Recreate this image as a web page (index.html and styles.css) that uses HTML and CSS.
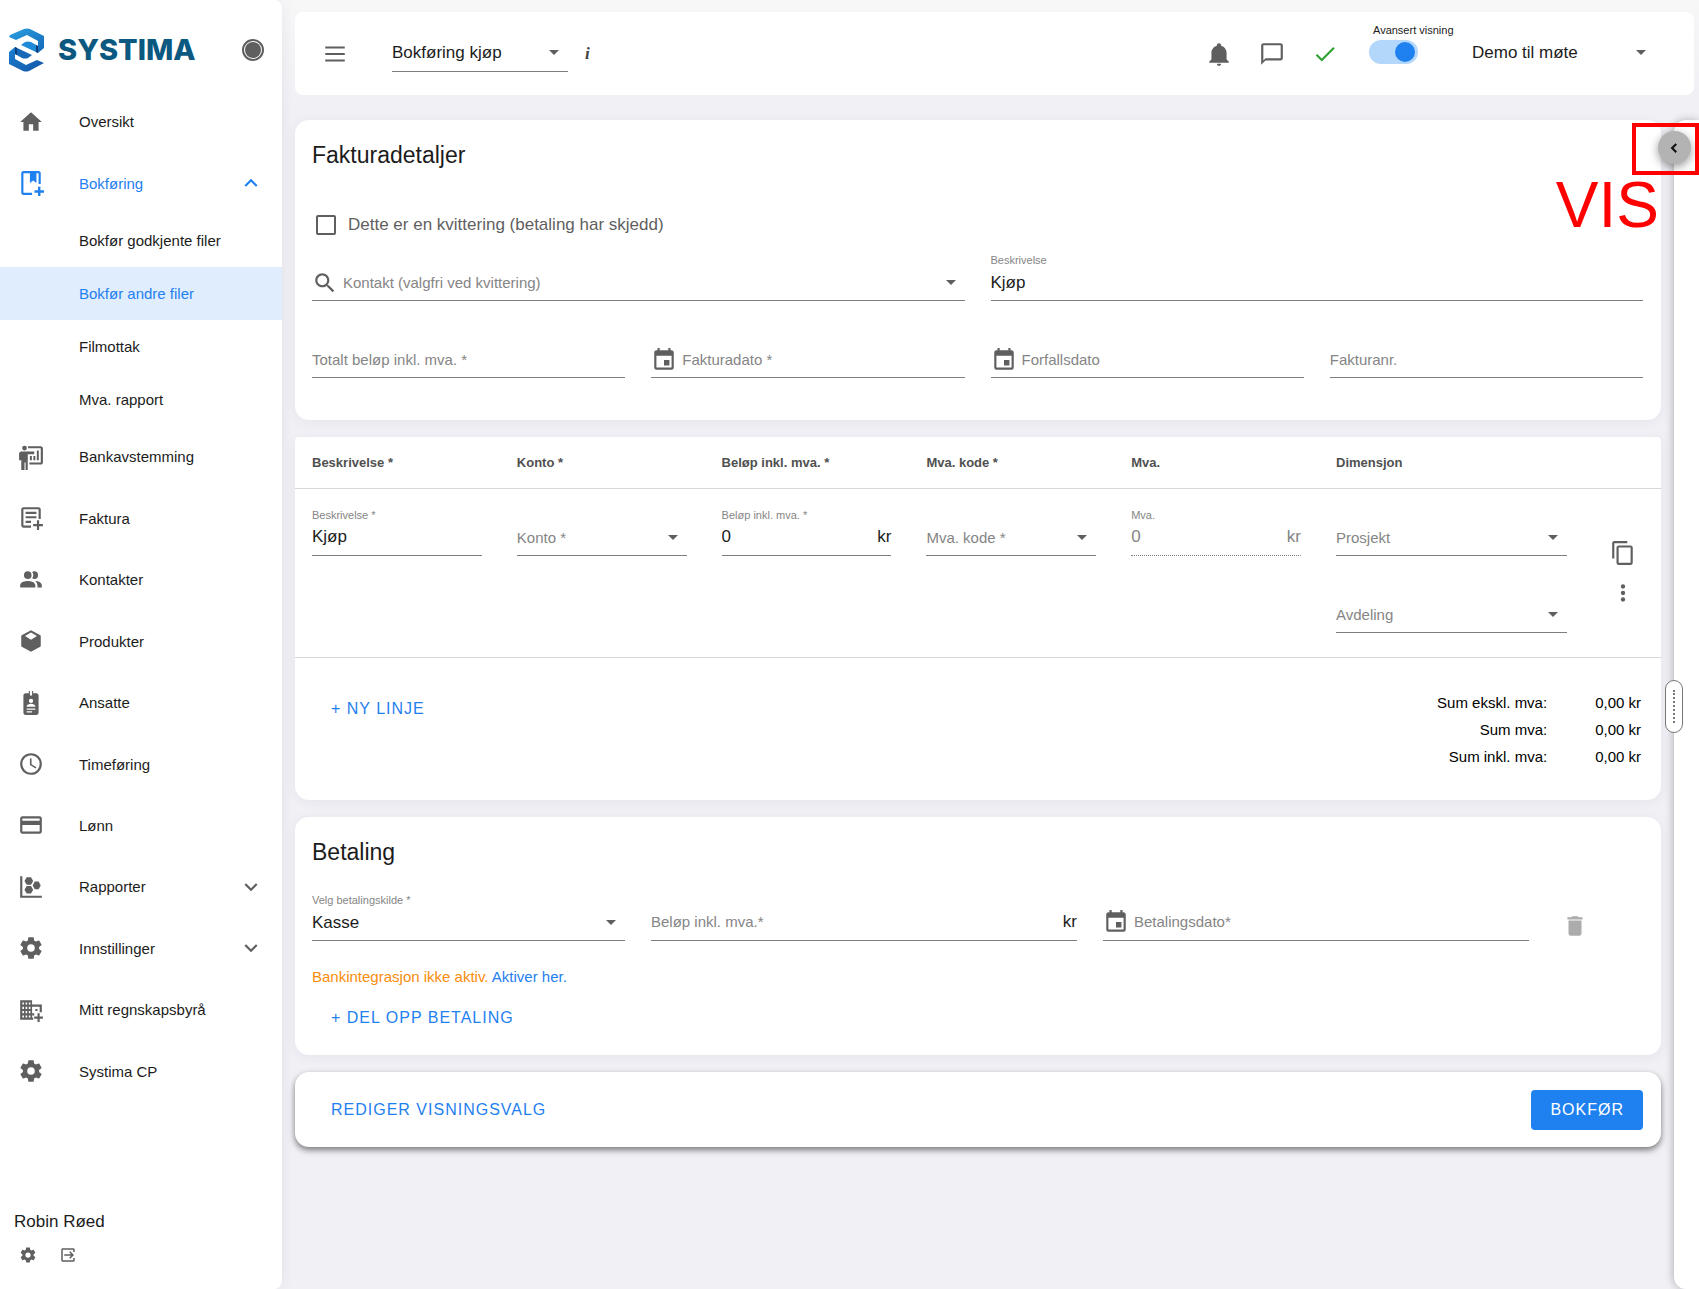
FILE: index.html
```
<!DOCTYPE html>
<html lang="no">
<head>
    <meta charset="UTF-8">
    <meta name="viewport" content="width=device-width, initial-scale=1.0">
    <title>Bokføring kjøp - Systima</title>
    <link rel="stylesheet" href="styles.css">
</head>
<body>
    <!-- Ikoner -->
    <svg class="sprite" aria-hidden="true">
        <symbol id="i-home" viewBox="0 0 24 24"><path d="M10 20v-6h4v6h5v-8h3L12 3 2 12h3v8z"/></symbol>
        <symbol id="i-book" viewBox="0 0 24 24"><path d="M5 1h14c1.100 0 2 .9 2 2v10h-2V3h-2v9l-3-2.200L11 12V3H5v18h8v2H5c-1.100 0-2-.9-2-2V3c0-1.100.9-2 2-2z"/><path d="M18.500 15.500h2.200v3.300H24V21h-3.300v3h-2.200v-3h-3.300v-2.200h3.300z"/></symbol>
        <symbol id="i-board" viewBox="0 0 24 24"><circle cx="6" cy="3.800" r="2.200"/><path d="M3 7h12v2.500H9V24H7v-7H6v7H3v-9H1V9c0-1.100.9-2 2-2z"/><path d="M9 2h12c1.100 0 2 .9 2 2v13c0 1.100-.9 2-2 2H10.500v-2H21V4H9.500z"/><path d="M11 11h1.800v4H11zM14.200 11H16v4h-1.800zM17.400 6h1.800v9h-1.800z"/></symbol>
        <symbol id="i-invoice" viewBox="0 0 24 24"><path d="M5 2h14c1.100 0 2 .9 2 2v9h-2V4H5v15h7v2H5c-1.100 0-2-.9-2-2V4c0-1.100.9-2 2-2z"/><path d="M7 6.300h10v2H7zM7 10.300h10v2H7zM7 14.500h5v2H7zM17.500 14h2v3.500H23v2h-3.500V23h-2v-3.500H14v-2h3.500z"/></symbol>
        <symbol id="i-people" viewBox="0 0 24 24"><path d="M16 17V19H2V17S2 13 9 13 16 17 16 17M12.500 7.500A3.500 3.500 0 1 0 9 11A3.500 3.500 0 0 0 12.500 7.500M15.940 13A5.320 5.320 0 0 1 18 17V19H22V17S22 13.370 15.940 13M15 4A3.390 3.390 0 0 0 13.070 4.590A5 5 0 0 1 13.070 10.410A3.390 3.390 0 0 0 15 11A3.500 3.500 0 0 0 15 4Z"/></symbol>
        <symbol id="i-box" viewBox="0 0 24 24"><path fill-rule="evenodd" d="M12 2l8.600 4.600c.3.200.4.500.4.900v9c0 .4-.2.700-.5.900L12 22l-8.500-4.600c-.3-.2-.5-.5-.5-.9v-9c0-.4.100-.7.400-.9zM12 4.200L6.500 7.300 12 10.800l5.500-3.500z"/></symbol>
        <symbol id="i-badge" viewBox="0 0 24 24"><path fill-rule="evenodd" d="M10 1h1v4h2V1h1v2h3c1.100 0 2 .9 2 2v16c0 1.100-.9 2-2 2H7c-1.100 0-2-.9-2-2V5c0-1.100.9-2 2-2h3zM12 8a2 2 0 1 0 0 4 2 2 0 0 0 0-4zM8 15.500h8v-.7c0-1.200-2-2.200-4-2.200s-4 1-4 2.200zM8 17v1.200h8V17zM8 19.500v1.200h5v-1.200z"/></symbol>
        <symbol id="i-clock" viewBox="0 0 24 24"><path d="M12 20A8 8 0 0 0 20 12A8 8 0 0 0 12 4A8 8 0 0 0 4 12A8 8 0 0 0 12 20M12 2A10 10 0 0 1 22 12A10 10 0 0 1 12 22C6.470 22 2 17.500 2 12A10 10 0 0 1 12 2M12.500 7V12.250L17 14.920L16.250 16.150L11 13V7H12.500Z"/></symbol>
        <symbol id="i-card" viewBox="0 0 24 24"><path d="M20 4H4c-1.110 0-1.990.89-1.990 2L2 18c0 1.110.89 2 2 2h16c1.110 0 2-.89 2-2V6c0-1.110-.89-2-2-2zm0 14H4v-6h16v6zm0-10H4V6h16v2z"/></symbol>
        <symbol id="i-chart" viewBox="0 0 24 24"><path d="M2 2h2v18h18v2H2zM8 3h4l2 3.500-2 3.500H8L6 6.500zM8 11h4l2 3.500-2 3.500H8l-2-3.500zM15.500 7h3.500l2 3.500-2 3.500h-3.500l-2-3.500z"/></symbol>
        <symbol id="i-cog" viewBox="0 0 24 24"><path d="M12,15.500A3.500,3.500 0 0,1 8.500,12A3.500,3.500 0 0,1 12,8.500A3.500,3.500 0 0,1 15.500,12A3.500,3.500 0 0,1 12,15.500M19.430,12.970C19.470,12.650 19.500,12.330 19.500,12C19.500,11.670 19.470,11.340 19.430,11L21.540,9.370C21.730,9.220 21.780,8.950 21.660,8.730L19.660,5.270C19.540,5.050 19.270,4.960 19.050,5.050L16.560,6.050C16.040,5.660 15.500,5.320 14.870,5.070L14.500,2.420C14.460,2.180 14.250,2 14,2H10C9.750,2 9.540,2.180 9.500,2.420L9.130,5.070C8.500,5.320 7.960,5.660 7.440,6.050L4.950,5.050C4.730,4.960 4.460,5.050 4.340,5.270L2.340,8.730C2.210,8.950 2.270,9.220 2.460,9.370L4.570,11C4.530,11.340 4.500,11.670 4.500,12C4.500,12.330 4.530,12.650 4.570,12.970L2.460,14.630C2.270,14.780 2.210,15.050 2.340,15.270L4.340,18.730C4.460,18.950 4.730,19.030 4.950,18.950L7.440,17.940C7.960,18.340 8.500,18.680 9.130,18.930L9.500,21.580C9.540,21.820 9.750,22 10,22H14C14.250,22 14.460,21.820 14.500,21.580L14.870,18.930C15.500,18.670 16.040,18.340 16.560,17.940L19.050,18.950C19.270,19.030 19.540,18.950 19.660,18.730L21.660,15.270C21.780,15.050 21.730,14.780 21.540,14.630L19.430,12.970Z"/></symbol>
        <symbol id="i-office" viewBox="0 0 24 24"><path fill-rule="evenodd" d="M2 3h11v4h9v7h-2V9h-7v10h1v2H2zM4 5v2h1.500V5zM7 5v2h1.500V5zM10 5v2h1.500V5zM4 9v2h1.500V9zM7 9v2h1.500V9zM10 9v2h1.500V9zM4 13v2h1.500v-2zM7 13v2h1.500v-2zM10 13v2h1.500v-2zM4 17v2h1.500v-2zM7 17v2h1.500v-2zM10 17v2h1.500v-2z"/><path d="M16 11h2v2h-2zM13 15h2v2h-2zM18 15h2v3h3v2h-3v3h-2v-3h-3v-2h3z"/></symbol>
        <symbol id="i-exit" viewBox="0 0 24 24"><path d="M4 3h15c1.100 0 2 .9 2 2v3h-2V5H5v14h14v-3h2v3c0 1.100-.9 2-2 2H5c-1.100 0-2-.9-2-2V5z"/><path d="M7 11h9.200l-2.600-2.600L15 7l5 5-5 5-1.400-1.400 2.600-2.600H7z"/></symbol>
        <symbol id="i-down" viewBox="0 0 24 24"><path d="M16.590 8.590L12 13.170 7.410 8.590 6 10l6 6 6-6z"/></symbol>
        <symbol id="i-up" viewBox="0 0 24 24"><path d="M12 8l-6 6 1.410 1.410L12 10.830l4.590 4.580L18 14z"/></symbol>
        <symbol id="i-left" viewBox="0 0 24 24"><path d="M16 7.500L14 5.500 7.500 12l6.500 6.500 2-2L11.500 12z"/></symbol>
        <symbol id="i-menu" viewBox="0 0 24 24"><path d="M3 5h18v2H3zM3 11h18v2H3zM3 17h18v2H3z"/></symbol>
        <symbol id="i-bell" viewBox="0 0 24 24"><path d="M21 19V20H3V19L5 17V11C5 7.900 7.030 5.170 10 4.290C10 4.190 10 4.100 10 4A2 2 0 0 1 14 4C14 4.100 14 4.190 14 4.290C16.970 5.170 19 7.900 19 11V17L21 19M14 21A2 2 0 0 1 10 21"/></symbol>
        <symbol id="i-chat" viewBox="0 0 24 24"><path d="M20 2H4c-1.100 0-2 .9-2 2v18l4-4h14c1.100 0 2-.9 2-2V4c0-1.100-.9-2-2-2zm0 14H6l-2 2V4h16v12z"/></symbol>
        <symbol id="i-check" viewBox="0 0 24 24"><path d="M9 16.170L4.830 12l-1.420 1.410L9 19 21 7l-1.410-1.410z"/></symbol>
        <symbol id="i-search" viewBox="0 0 24 24"><path d="M15.500 14h-.79l-.28-.27C15.410 12.590 16 11.110 16 9.500 16 5.910 13.090 3 9.500 3S3 5.910 3 9.500 5.910 16 9.500 16c1.610 0 3.090-.59 4.230-1.570l.27.28v.79l5 4.990L20.490 19l-4.990-5zm-6 0C7.010 14 5 11.990 5 9.500S7.010 5 9.500 5 14 7.010 14 9.500 11.990 14 9.500 14z"/></symbol>
        <symbol id="i-calendar" viewBox="0 0 24 24"><path d="M19,19H5V8H19M16,1V3H8V1H6V3H5C3.890,3 3,3.890 3,5V19A2,2 0 0,0 5,21H19A2,2 0 0,0 21,19V5C21,3.890 20.100,3 19,3H18V1M17,12H12V17H17V12Z"/></symbol>
        <symbol id="i-copy" viewBox="0 0 24 24"><path d="M16 1H4c-1.100 0-2 .9-2 2v14h2V3h12V1zm3 4H8c-1.100 0-2 .9-2 2v14c0 1.100.9 2 2 2h11c1.100 0 2-.9 2-2V7c0-1.100-.9-2-2-2zm0 16H8V7h11v14z"/></symbol>
        <symbol id="i-more" viewBox="0 0 24 24"><circle cx="12" cy="6" r="2"/><circle cx="12" cy="12" r="2"/><circle cx="12" cy="18" r="2"/></symbol>
        <symbol id="i-trash" viewBox="0 0 24 24"><path d="M6 19c0 1.100.9 2 2 2h8c1.100 0 2-.9 2-2V7H6v12zM19 4h-3.500l-1-1h-5l-1 1H5v2h14V4z"/></symbol>
    </svg>

    <div class="app">
        <aside class="sidebar">
            <div class="brand">
                <svg class="brand-mark" viewBox="0 0 35 44" aria-hidden="true">
                    <defs>
                        <linearGradient id="g1" x1="0" y1="0" x2="1" y2="1">
                            <stop offset="0" stop-color="#2a9fe0"/>
                            <stop offset="1" stop-color="#1668b8"/>
                        </linearGradient>
                        <linearGradient id="g2" x1="0" y1="0" x2="1" y2="1">
                            <stop offset="0" stop-color="#1b7fd0"/>
                            <stop offset="1" stop-color="#1256a6"/>
                        </linearGradient>
                    </defs>
                    <path fill="url(#g1)" d="M0 9L1 7 15 1q3-1 6 0l14 7v12l-6 5V13L18 7 7 12z"/>
                    <path fill="url(#g2)" d="M35 35l-15 8q-3 1-6 0L0 36V24l6-5v12l11 6 11-5z"/>
                    <path fill="#1f8bd8" d="M12 17l4-3q3-1 6 0l7 4v7z"/>
                    <path fill="#1769b8" d="M23 27l-4 3q-3 1-6 0l-7-4v-7z"/>
                    <path fill="#0c3d7c" d="M27 17l2 1v7l-2-1zM6 19l2 1v7l-2-1z"/>
                </svg>
                <span class="brand-name">SYSTIMA</span>
                <button class="pin" type="button" aria-label="Fest meny"><span></span></button>
            </div>

            <nav class="menu">
                <a class="menu-item" href="#"><svg class="icon"><use href="#i-home"/></svg>Oversikt</a>
                <a class="menu-item open" href="#"><svg class="icon"><use href="#i-book"/></svg>Bokføring<svg class="icon chevron"><use href="#i-up"/></svg></a>
                <div class="submenu">
                    <a href="#">Bokfør godkjente filer</a>
                    <a class="active" href="#">Bokfør andre filer</a>
                    <a href="#">Filmottak</a>
                    <a href="#">Mva. rapport</a>
                </div>
                <a class="menu-item" href="#"><svg class="icon"><use href="#i-board"/></svg>Bankavstemming</a>
                <a class="menu-item" href="#"><svg class="icon"><use href="#i-invoice"/></svg>Faktura</a>
                <a class="menu-item" href="#"><svg class="icon"><use href="#i-people"/></svg>Kontakter</a>
                <a class="menu-item" href="#"><svg class="icon"><use href="#i-box"/></svg>Produkter</a>
                <a class="menu-item" href="#"><svg class="icon"><use href="#i-badge"/></svg>Ansatte</a>
                <a class="menu-item" href="#"><svg class="icon"><use href="#i-clock"/></svg>Timeføring</a>
                <a class="menu-item" href="#"><svg class="icon"><use href="#i-card"/></svg>Lønn</a>
                <a class="menu-item" href="#"><svg class="icon"><use href="#i-chart"/></svg>Rapporter<svg class="icon chevron"><use href="#i-down"/></svg></a>
                <a class="menu-item" href="#"><svg class="icon"><use href="#i-cog"/></svg>Innstillinger<svg class="icon chevron"><use href="#i-down"/></svg></a>
                <a class="menu-item" href="#"><svg class="icon"><use href="#i-office"/></svg>Mitt regnskapsbyrå</a>
                <a class="menu-item" href="#"><svg class="icon"><use href="#i-cog"/></svg>Systima CP</a>
            </nav>

            <div class="user">
                <div class="user-name">Robin Røed</div>
                <div class="user-actions">
                    <button class="icon-button" type="button" aria-label="Innstillinger"><svg class="icon small"><use href="#i-cog"/></svg></button>
                    <button class="icon-button" type="button" aria-label="Logg ut"><svg class="icon small"><use href="#i-exit"/></svg></button>
                </div>
            </div>
        </aside>

        <div class="main">
            <header class="topbar">
                <button class="icon-button" type="button" aria-label="Meny"><svg class="icon"><use href="#i-menu"/></svg></button>
                <div class="control page-select">
                    <select aria-label="Side"><option>Bokføring kjøp</option></select>
                    <span class="caret"></span>
                </div>
                <span class="info">i</span>

                <div class="topbar-right">
                    <button class="icon-button" type="button" aria-label="Varsler"><svg class="icon"><use href="#i-bell"/></svg></button>
                    <button class="icon-button" type="button" aria-label="Meldinger"><svg class="icon"><use href="#i-chat"/></svg></button>
                    <button class="icon-button ok" type="button" aria-label="Status"><svg class="icon"><use href="#i-check"/></svg></button>
                    <label class="toggle">
                        <span>Avansert visning</span>
                        <input type="checkbox" role="switch" checked>
                    </label>
                    <div class="control team-select">
                        <select aria-label="Firma"><option>Demo til møte</option></select>
                        <span class="caret"></span>
                    </div>
                </div>
            </header>

            <div class="workspace">
                <main class="content">
                    <section class="card details">
                        <h2>Fakturadetaljer</h2>
                        <label class="receipt">
                            <input type="checkbox">
                            Dette er en kvittering (betaling har skjedd)
                        </label>
                        <div class="form-grid">
                            <div class="field wide">
                                <div class="control">
                                    <svg class="icon"><use href="#i-search"/></svg>
                                    <input type="text" placeholder="Kontakt (valgfri ved kvittering)" aria-label="Kontakt">
                                    <span class="caret"></span>
                                </div>
                            </div>
                            <div class="field wide">
                                <label for="description">Beskrivelse</label>
                                <div class="control"><input type="text" id="description" value="Kjøp"></div>
                            </div>
                            <div class="field">
                                <div class="control"><input type="text" placeholder="Totalt beløp inkl. mva. *" aria-label="Totalt beløp inkl. mva."></div>
                            </div>
                            <div class="field">
                                <div class="control">
                                    <svg class="icon"><use href="#i-calendar"/></svg>
                                    <input type="text" placeholder="Fakturadato *" aria-label="Fakturadato">
                                </div>
                            </div>
                            <div class="field">
                                <div class="control">
                                    <svg class="icon"><use href="#i-calendar"/></svg>
                                    <input type="text" placeholder="Forfallsdato" aria-label="Forfallsdato">
                                </div>
                            </div>
                            <div class="field">
                                <div class="control"><input type="text" placeholder="Fakturanr." aria-label="Fakturanr."></div>
                            </div>
                        </div>
                    </section>

                    <section class="card lines">
                        <table class="line-table">
                            <thead>
                                <tr>
                                    <th>Beskrivelse *</th>
                                    <th>Konto *</th>
                                    <th>Beløp inkl. mva. *</th>
                                    <th>Mva. kode *</th>
                                    <th>Mva.</th>
                                    <th class="col-dimension">Dimensjon</th>
                                    <th class="col-actions"></th>
                                </tr>
                            </thead>
                            <tbody>
                                <tr>
                                    <td>
                                        <div class="field">
                                            <label for="line-description">Beskrivelse *</label>
                                            <div class="control"><input type="text" id="line-description" value="Kjøp"></div>
                                        </div>
                                    </td>
                                    <td>
                                        <div class="field">
                                            <div class="control"><select class="empty" aria-label="Konto"><option>Konto *</option></select><span class="caret"></span></div>
                                        </div>
                                    </td>
                                    <td>
                                        <div class="field">
                                            <label for="line-amount">Beløp inkl. mva. *</label>
                                            <div class="control"><input type="text" id="line-amount" value="0"><span class="suffix">kr</span></div>
                                        </div>
                                    </td>
                                    <td>
                                        <div class="field">
                                            <div class="control"><select class="empty" aria-label="Mva. kode"><option>Mva. kode *</option></select><span class="caret"></span></div>
                                        </div>
                                    </td>
                                    <td>
                                        <div class="field disabled">
                                            <label for="line-vat">Mva.</label>
                                            <div class="control"><input type="text" id="line-vat" value="0" disabled><span class="suffix">kr</span></div>
                                        </div>
                                    </td>
                                    <td>
                                        <div class="dimensions">
                                            <div class="field">
                                                <div class="control"><select class="empty" aria-label="Prosjekt"><option>Prosjekt</option></select><span class="caret"></span></div>
                                            </div>
                                            <div class="field">
                                                <div class="control"><select class="empty" aria-label="Avdeling"><option>Avdeling</option></select><span class="caret"></span></div>
                                            </div>
                                        </div>
                                    </td>
                                    <td class="col-actions">
                                        <div class="line-actions">
                                            <button class="icon-button" type="button" aria-label="Kopier linje"><svg class="icon"><use href="#i-copy"/></svg></button>
                                            <button class="icon-button" type="button" aria-label="Mer"><svg class="icon"><use href="#i-more"/></svg></button>
                                        </div>
                                    </td>
                                </tr>
                            </tbody>
                        </table>
                        <div class="line-footer">
                            <button class="text-button" type="button">+ NY LINJE</button>
                            <dl class="sums">
                                <dt>Sum ekskl. mva:</dt><dd>0,00 kr</dd>
                                <dt>Sum mva:</dt><dd>0,00 kr</dd>
                                <dt>Sum inkl. mva:</dt><dd>0,00 kr</dd>
                            </dl>
                        </div>
                    </section>

                    <section class="card payment">
                        <h2>Betaling</h2>
                        <div class="payment-grid">
                            <div class="field">
                                <label for="source">Velg betalingskilde *</label>
                                <div class="control"><select id="source"><option>Kasse</option></select><span class="caret"></span></div>
                            </div>
                            <div class="field">
                                <div class="control"><input type="text" placeholder="Beløp inkl. mva.*" aria-label="Beløp inkl. mva."><span class="suffix">kr</span></div>
                            </div>
                            <div class="field">
                                <div class="control">
                                    <svg class="icon"><use href="#i-calendar"/></svg>
                                    <input type="text" placeholder="Betalingsdato*" aria-label="Betalingsdato">
                                </div>
                            </div>
                            <button class="icon-button remove" type="button" aria-label="Slett" disabled><svg class="icon"><use href="#i-trash"/></svg></button>
                        </div>
                        <p class="bank-note">Bankintegrasjon ikke aktiv. <a href="#">Aktiver her.</a></p>
                        <button class="text-button" type="button">+ DEL OPP BETALING</button>
                    </section>

                    <section class="card actions">
                        <button class="text-button" type="button">REDIGER VISNINGSVALG</button>
                        <button class="primary-button" type="button">BOKFØR</button>
                    </section>
                </main>

                <aside class="drawer">
                    <button class="drawer-toggle" type="button" aria-label="Vis"><svg class="icon small"><use href="#i-left"/></svg></button>
                    <div class="drawer-handle"></div>
                    <div class="marker"></div>
                    <div class="marker-text">VIS</div>
                </aside>
            </div>
        </div>
    </div>
</body>
</html>
```
FILE: styles.css
```
* {
    box-sizing: border-box;
}

body {
    margin: 0;
    font-family: "Liberation Sans", Arial, sans-serif;
    font-size: 15px;
    color: #1c1c1c;
    background: #f0f0f5 linear-gradient(#f7f7f8, #f0f0f5 110px) no-repeat;
}

a {
    color: #1f80f0;
    text-decoration: none;
}

button,
input,
select {
    font-family: inherit;
    color: inherit;
}

.sprite {
    display: none;
}

.icon {
    width: 26px;
    height: 26px;
    flex: none;
    fill: #5f5f5f;
}

.icon.small {
    width: 18px;
    height: 18px;
}

.icon-button {
    display: flex;
    align-items: center;
    justify-content: center;
    padding: 0;
    border: none;
    background: none;
    cursor: pointer;
}

.app {
    display: flex;
    min-height: 100vh;
}

/* Sidemeny */
.sidebar {
    display: flex;
    flex-direction: column;
    flex: none;
    width: 282px;
    background: #fff;
    border-radius: 0 8px 8px 0;
    box-shadow: 2px 0 12px rgba(60, 50, 100, 0.06);
}

.brand {
    display: flex;
    align-items: center;
    height: 91px;
    padding: 8px 18px 0 9px;
}

.brand-mark {
    width: 35px;
    height: 44px;
    margin-right: 14px;
}

.brand-name {
    font-family: Inter, "Liberation Sans", sans-serif;
    font-size: 29px;
    font-weight: 800;
    color: #0b5880;
}

.pin {
    width: 22px;
    height: 22px;
    margin-left: auto;
    padding: 1px;
    border: 2px solid #5f5f5f;
    border-radius: 50%;
    background: none;
}

.pin span {
    display: block;
    height: 100%;
    border-radius: 50%;
    background: #5f5f5f;
}

.menu {
    display: flex;
    flex-direction: column;
    flex: 1;
}

.menu a {
    display: flex;
    align-items: center;
    color: #1c1c1c;
}

.menu .menu-item {
    flex: 1;
    gap: 35px;
    padding: 0 18px;
}

.menu .menu-item.open {
    color: #1f80f0;
}

.menu .open .icon {
    fill: #1f80f0;
}

.menu .chevron {
    margin-left: auto;
}

.submenu a {
    height: 53px;
    padding-left: 79px;
}

.submenu a.active {
    color: #1f80f0;
    background: #e0edfc;
}

.user {
    height: 187px;
    padding: 108px 14px 0;
}

.user-name {
    font-size: 17px;
    line-height: 24px;
}

.user-actions {
    display: flex;
    gap: 22px;
    padding: 12px 5px;
}

/* Toppfelt */
.main {
    display: flex;
    flex-direction: column;
    flex: 1;
    min-width: 0;
    padding: 12px 0 0 13px;
}

.topbar {
    display: flex;
    align-items: center;
    height: 83px;
    margin-right: 5px;
    padding: 0 39px 0 27px;
    background: #fff;
    border-radius: 8px;
}

.page-select {
    margin-left: 44px;
}

.topbar .control {
    width: 176px;
    height: 36px;
}

.info {
    margin-left: 17px;
    font-family: "Liberation Serif", serif;
    font-size: 17px;
    font-style: italic;
    font-weight: bold;
    color: #444;
}

.topbar-right {
    display: flex;
    align-items: center;
    align-self: stretch;
    gap: 27px;
    margin-left: auto;
}

.topbar .ok .icon {
    fill: #2fa236;
}

.toggle {
    display: flex;
    flex-direction: column;
    align-self: flex-start;
    gap: 2px;
    width: 90px;
    padding: 10px 0 0;
    margin-left: 4px;
    font-size: 11px;
    line-height: 16px;
}

.toggle span {
    padding-left: 4px;
    white-space: nowrap;
}

.toggle input {
    display: flex;
    appearance: none;
    width: 49px;
    height: 24px;
    margin: 0;
    padding: 2px 3px;
    border-radius: 12px;
    background: #b3d6fb;
    justify-content: flex-end;
}

.toggle input::before {
    content: "";
    width: 20px;
    height: 20px;
    border-radius: 50%;
    background: #1f80f0;
}

.topbar .team-select {
    width: 183px;
    margin-left: -14px;
    border-bottom: none;
}

/* Skjemafelt */
.field {
    display: flex;
    flex-direction: column;
    justify-content: flex-end;
    height: 48px;
}

.field label {
    font-size: 11px;
    line-height: 14px;
    color: #858585;
    white-space: nowrap;
}

.control {
    display: flex;
    align-items: center;
    height: 34px;
    padding-bottom: 2px;
    border-bottom: 1px solid #7d7d7d;
}

.control input,
.control select {
    flex: 1;
    min-width: 0;
    width: 100%;
    height: 30px;
    padding: 0;
    border: none;
    outline: none;
    appearance: none;
    background: none;
    font-size: 17px;
}

.control .icon {
    margin-right: 5px;
}

.control input::placeholder {
    font-size: 15px;
    color: #858585;
    opacity: 1;
}

.control select.empty {
    font-size: 15px;
    color: #858585;
}

.caret {
    flex: none;
    margin-right: 9px;
    border: 5px solid transparent;
    border-top-color: #5f5f5f;
    border-bottom: none;
}

.suffix {
    font-size: 17px;
}

.disabled .control {
    color: #858585;
    border-bottom-style: dotted;
}

/* Innhold */
.workspace {
    display: flex;
    flex: 1;
    gap: 13px;
    padding-top: 25px;
}

.content {
    display: flex;
    flex-direction: column;
    flex: 1;
    gap: 17px;
    min-width: 0;
}

.card {
    background: #fff;
    border-radius: 14px;
    box-shadow: 0 2px 12px rgba(60, 50, 100, 0.06);
}

h2 {
    margin: 0;
    font-size: 23px;
    font-weight: normal;
    line-height: 30px;
}

.details {
    padding: 20px 18px 42px 17px;
}

.receipt {
    display: flex;
    align-items: center;
    gap: 12px;
    height: 24px;
    margin: 43px 0 16px 4px;
    font-size: 17px;
    color: #5f5f5f;
}

.receipt input {
    appearance: none;
    width: 20px;
    height: 20px;
    margin: 0;
    border: 2px solid #5f5f5f;
    border-radius: 2px;
}

.form-grid {
    display: grid;
    grid-template-columns: repeat(4, 1fr);
    gap: 29px 26px;
}

.wide {
    grid-column: span 2;
}

.lines {
    border-top-left-radius: 4px;
    border-top-right-radius: 4px;
}

.line-table {
    width: 100%;
    table-layout: fixed;
    border-collapse: collapse;
}

.line-table tr {
    border-bottom: 1px solid #d8d8d8;
}

.line-table th {
    height: 51px;
    padding: 0 17px;
    font-size: 13px;
    text-align: left;
    color: #505050;
}

.line-table td {
    padding: 19px 18px 24px 17px;
    vertical-align: top;
}

.line-table .col-dimension {
    width: 266px;
}

.line-table .col-actions {
    width: 76px;
    padding-left: 0;
    padding-right: 0;
}

.dimensions {
    display: flex;
    flex-direction: column;
    gap: 29px;
}

.line-actions {
    display: flex;
    flex-direction: column;
    align-items: center;
    gap: 14px;
    padding-top: 32px;
}

.line-footer {
    display: flex;
    justify-content: space-between;
    align-items: flex-start;
    padding: 31px 20px 30px 17px;
}

.sums {
    display: grid;
    grid-template-columns: auto auto;
    gap: 0 48px;
    margin: 0;
    line-height: 27px;
    text-align: right;
    color: #000;
}

.sums dd {
    margin: 0;
}

.text-button,
.primary-button {
    height: 40px;
    padding: 0 19px;
    border: none;
    border-radius: 4px;
    background: none;
    font-size: 16px;
    letter-spacing: 1px;
    color: #1f80f0;
    cursor: pointer;
}

.primary-button {
    color: #fff;
    background: #1f80f0;
}

.payment {
    padding: 20px 18px 17px 17px;
}

.payment-grid {
    display: grid;
    grid-template-columns: 313fr 426fr 426fr 88fr;
    gap: 26px;
    margin-top: 26px;
}

.remove {
    align-self: end;
    width: 40px;
    height: 30px;
}

.remove .icon {
    fill: #acacac;
}

.bank-note {
    margin: 24px 0 9px;
    line-height: 24px;
    color: #fa8c0c;
}

.actions {
    display: flex;
    justify-content: space-between;
    align-items: center;
    padding: 18px 18px 17px 17px;
    box-shadow: 0 3px 6px rgba(0, 0, 0, 0.5);
}

/* Skuff til høyre */
.drawer {
    position: relative;
    flex: none;
    width: 25px;
    background: #fff;
    border-radius: 12px 0 0 12px;
    box-shadow: -1px 0 8px rgba(0, 0, 0, 0.25);
}

.drawer-toggle {
    position: absolute;
    top: 11px;
    left: -16px;
    display: flex;
    align-items: center;
    justify-content: center;
    width: 33px;
    height: 33px;
    padding: 0 2px 0 0;
    border: none;
    border-radius: 50%;
    background: #b3b3b3;
    box-shadow: 0 3px 10px rgba(0, 0, 0, 0.4);
}

.drawer-toggle .icon {
    fill: #111;
}

.drawer-handle {
    position: absolute;
    top: 560px;
    left: -9px;
    display: flex;
    justify-content: center;
    width: 18px;
    height: 53px;
    padding: 9px 0;
    border: 1px solid #777;
    border-radius: 9px;
    background: #fff;
}

.drawer-handle::before {
    content: "";
    border-left: 2px dotted #777;
}

.marker {
    position: absolute;
    top: 3px;
    right: 0;
    width: 67px;
    height: 52px;
    border: 4px solid #f00;
}

.marker-text {
    position: absolute;
    top: 48px;
    right: 40px;
    font-size: 64px;
    line-height: 74px;
    color: #f00;
}
```
